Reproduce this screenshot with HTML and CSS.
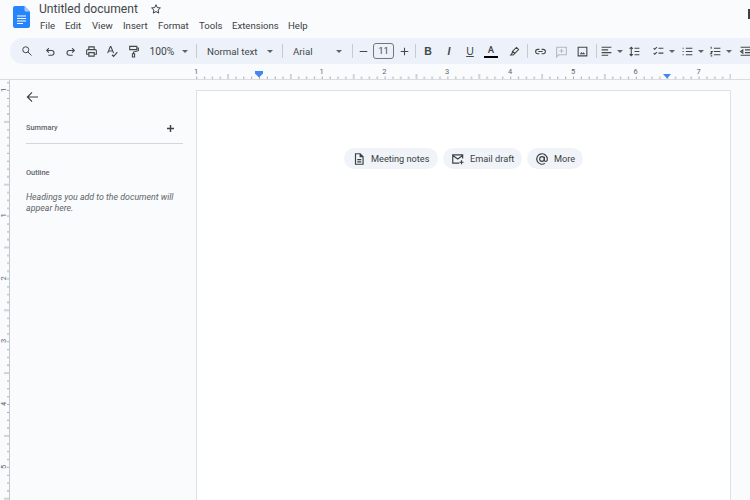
FILE: index.html
```html
<!DOCTYPE html>
<html lang="en">
<head>
<meta charset="utf-8">
<title>Untitled document</title>
<link rel="stylesheet" href="styles.css">
</head>
<body>
<header class="header">
  <svg class="logo" viewBox="0 0 17 22"><path d="M2 0h9.500L17 5.500V20a2 2 0 0 1-2 2H2a2 2 0 0 1-2-2V2a2 2 0 0 1 2-2z" fill="#2684fc"/><path d="M11.500 0L17 5.500h-4a1.500 1.500 0 0 1-1.500-1.500z" fill="#a9cbfa"/><path d="M4 10h9M4 12.500h9M4 15h9M4 17.500h6" stroke="#fff" stroke-width="1.200"/></svg>
  <div class="titles">
    <div class="title-row">
      <span class="title">Untitled document</span>
      <svg class="star" viewBox="0 0 24 24"><path d="M12 3.500l2.600 5.700 6.200.7-4.600 4.200 1.300 6.100L12 17.100l-5.500 3.100 1.300-6.100-4.600-4.200 6.200-.7z" fill="none" stroke="#3c4043" stroke-width="2"/></svg>
    </div>
    <nav class="menu"><span>File</span><span>Edit</span><span>View</span><span>Insert</span><span>Format</span><span>Tools</span><span>Extensions</span><span>Help</span></nav>
  </div>
  <span class="corner"></span>
</header>

<div class="toolbar">
  <span class="slot"><svg class="ic small" viewBox="0 0 24 24"><circle cx="9.500" cy="9.500" r="6"/><path d="M14 14l7 7"/></svg></span>
  <span class="slot m2"><svg class="ic" viewBox="0 0 24 24"><path d="M9 6L5 10l4 4M5 10h9a4.500 4.500 0 0 1 0 9H8"/></svg></span>
  <span class="slot mn1"><svg class="ic" viewBox="0 0 24 24"><path d="M15 6l4 4-4 4M19 10h-9a4.500 4.500 0 0 0 0 9h6"/></svg></span>
  <span class="slot"><svg class="ic" viewBox="0 0 24 24"><path d="M7 8V3.500h10V8M7 17H3v-6.500a2 2 0 0 1 2-2h14a2 2 0 0 1 2 2V17h-4M7 14h10v6.500H7z"/></svg></span>
  <span class="slot"><svg class="ic" viewBox="0 0 24 24"><path d="M3 15L8 3h1l5 12M5 11h7M11 18l3 3 7-8"/></svg></span>
  <span class="slot"><svg class="ic" viewBox="0 0 24 24"><path d="M5 2.500h13v6H5zM18 5.500h3v5l-9 2.500v3M10 16h4v6h-4z"/></svg></span>
  <span class="txt w-zoom">100%</span><span class="car w-car20"></span>
  <span class="sep m1"></span>
  <span class="txt w-style">Normal text</span><span class="car w-car14"></span>
  <span class="sep m5"></span>
  <span class="txt w-font">Arial</span><span class="car w-car14"></span>
  <span class="sep m6"></span>
  <span class="slot w20"><svg class="ic" viewBox="0 0 24 24"><path d="M5 12h14"/></svg></span>
  <span class="size">11</span>
  <span class="slot w20"><svg class="ic" viewBox="0 0 24 24"><path d="M5 12h14M12 5v14"/></svg></span>
  <span class="sep m1"></span>
  <span class="slot m1h fmt bold">B</span>
  <span class="slot fmt ital">I</span>
  <span class="slot fmt under">U</span>
  <span class="slot color"><span class="color-a">A</span><span class="color-bar"></span></span>
  <span class="slot m2"><svg class="ic" viewBox="0 0 24 24"><path d="M15.500 4.500l4 4-7 7-4-4zM8.500 11.500l-1 4-2.500 3h4.500l3-3"/></svg></span>
  <span class="sep m2h"></span>
  <span class="slot m1h"><svg class="ic" viewBox="0 0 24 24"><path d="M10 8H7a4 4 0 0 0 0 8h3M14 8h3a4 4 0 0 1 0 8h-3M8 12h8"/></svg></span>
  <span class="slot"><svg class="ic faint" viewBox="0 0 24 24"><path d="M3 4h18v14H7l-4 4zM12 7.500v7M8.500 11h7"/></svg></span>
  <span class="slot"><svg class="ic" viewBox="0 0 24 24"><path d="M4 4h16v16H4z"/><path class="solid" d="M7 17l3-4 2 2.500 2-2 3 3.500z"/></svg></span>
  <span class="sep m3h"></span>
  <span class="slot w19"><svg class="ic" viewBox="0 0 24 24"><path d="M3 4h18M3 9h12M3 14h18M3 19h12"/></svg></span><span class="car w-car7"></span>
  <span class="slot m1"><svg class="ic" viewBox="0 0 24 24"><path d="M6 4v16M3 7l3-3 3 3M3 17l3 3 3-3M12 6h9M12 12h9M12 18h9"/></svg></span>
  <span class="slot w20 m3"><svg class="ic" viewBox="0 0 24 24"><path d="M3 6l2 2 4-4M3 15l2 2 4-4M12 6h9M12 15h9"/></svg></span><span class="car w-car7"></span>
  <span class="slot w20 m2"><svg class="ic" viewBox="0 0 24 24"><path d="M3 6h2M3 12h2M3 18h2M9 6h12M9 12h12M9 18h12"/></svg></span><span class="car w-car7"></span>
  <span class="slot w20 m1"><svg class="ic" viewBox="0 0 24 24"><path d="M4 3v4M3 12h3l-3 4h3M3 20h3M9 6h12M9 12h12M9 18h12"/></svg></span><span class="car w-car7"></span>
  <span class="slot w20 m3"><svg class="ic" viewBox="0 0 24 24"><path d="M3 4h18M11 9h10M11 14h10M3 19h18M7 9l-4 3 4 3z"/></svg></span>
</div>

<svg class="h-ruler" viewBox="0 0 750 15">
  <defs>
    <pattern id="hticks" x="259" y="0" width="62.800" height="15" patternUnits="userSpaceOnUse">
      <path d="M.500 12.500v3M8.350 12.500v3M16.200 12.500v3M24.050 12.500v3M31.900 10v6M39.750 12.500v3M47.600 12.500v3M55.450 12.500v3" stroke="#a8adb2" stroke-width="1" fill="none"/>
    </pattern>
  </defs>
  <rect x="196" y="0" width="535" height="15" fill="url(#hticks)"/>
  <g class="rule-num">
    <text x="196" y="10">1</text><text x="321.500" y="10">1</text><text x="384.300" y="10">2</text><text x="447" y="10">3</text><text x="510" y="10">4</text><text x="573" y="10">5</text><text x="635.500" y="10">6</text><text x="698.500" y="10">7</text>
  </g>
  <path d="M255 7h8v2.500l-4 4-4-4z" fill="#4285f4"/>
  <path d="M663 10h8l-4 4.500z" fill="#4285f4"/>
</svg>

<main class="main">
  <svg class="v-ruler" viewBox="0 0 10 421">
    <defs>
      <pattern id="vticks" x="0" y="10" width="10" height="62.800" patternUnits="userSpaceOnUse">
        <path d="M7 .500h3M7 8.350h3M7 16.200h3M7 24.050h3M4 31.900h6M7 39.750h3M7 47.600h3M7 55.450h3" stroke="#a8adb2" fill="none"/>
      </pattern>
    </defs>
    <rect width="10" height="421" fill="url(#vticks)"/>
    <path d="M9.500 0v421" stroke="#c4c7c9" fill="none"/>
    <g class="rule-num">
      <text transform="translate(6 10) rotate(-90)">1</text>
      <text transform="translate(6 135.500) rotate(-90)">1</text>
      <text transform="translate(6 198.300) rotate(-90)">2</text>
      <text transform="translate(6 261) rotate(-90)">3</text>
      <text transform="translate(6 324) rotate(-90)">4</text>
      <text transform="translate(6 387) rotate(-90)">5</text>
    </g>
  </svg>

  <aside class="side">
    <svg class="back" viewBox="0 0 14 12"><path d="M13 6H1.500M6.500 1L1.500 6l5 5" fill="none" stroke="#3c4043" stroke-width="1.200"/></svg>
    <div class="side-row">
      <span class="side-label">Summary</span>
      <svg class="plus" viewBox="0 0 9 9"><path d="M4.500 1v7M1 4.500h7" stroke="#3c4043" stroke-width="1.400"/></svg>
    </div>
    <hr class="rule">
    <div class="side-label outline">Outline</div>
    <p class="hint">Headings you add to the document will appear here.</p>
  </aside>

  <section class="page">
    <div class="chips">
      <span class="chip c1"><svg class="ic chip-ic" viewBox="0 0 24 24"><path d="M6 3h8l5 5v13H6zM14 3v5h5M9 13h7M9 17h7"/></svg>Meeting notes</span>
      <span class="chip c2"><svg class="ic chip-ic" viewBox="0 0 24 24"><path d="M20 11V5H3v14h11M3 6l8.500 6L20 6M18 14v7M14.500 17.500h7"/></svg>Email draft</span>
      <span class="chip c3"><svg class="ic chip-ic" viewBox="0 0 24 24"><circle cx="12" cy="12" r="4"/><path d="M16 8v5.500a2.500 2.500 0 0 0 5 0V12a9 9 0 1 0-4 7.500"/></svg>More</span>
    </div>
  </section>
</main>
</body>
</html>
```
FILE: styles.css
```css
* { box-sizing: border-box; }
html, body { margin: 0; height: 100%; }
body {
  width: 750px;
  height: 500px;
  overflow: hidden;
  background: #f9fbfd;
  color: #3c4043;
  font-family: Roboto, "Liberation Sans", sans-serif;
  display: flex;
  flex-direction: column;
}

.header { height: 38px; flex: none; display: flex; }
.logo { width: 17px; height: 22px; margin: 6px 0 0 13px; flex: none; }
.titles { margin-left: 9px; }
.title-row { display: flex; align-items: center; height: 17px; }
.title { font-size: 12.100px; color: #444746; width: 99px; white-space: nowrap; }
.star { width: 12px; height: 12px; margin-left: 12px; }
.menu { display: flex; font-size: 9.600px; color: #3c4043; margin-top: 3px; line-height: 12px; padding-left: 1px; }
.menu span:nth-child(1) { width: 25px; }
.menu span:nth-child(2) { width: 27px; }
.menu span:nth-child(3) { width: 31px; }
.menu span:nth-child(4) { width: 35px; }
.menu span:nth-child(5) { width: 41px; }
.menu span:nth-child(6) { width: 33px; }
.menu span:nth-child(7) { width: 56px; }
.corner { width: 2px; height: 10px; background: #3c4043; margin: 9px 0 0 auto; }

.toolbar {
  height: 26px;
  flex: none;
  margin-left: 10px;
  padding-left: 6.500px;
  background: #edf2fa;
  border-radius: 13px 0 0 13px;
  display: flex;
  align-items: center;
  overflow: hidden;
  font-size: 9.700px;
  color: #444746;
}
.slot { width: 21px; height: 22px; flex: none; display: flex; align-items: center; justify-content: center; }
.w19 { width: 19px; }
.w20 { width: 20px; }
.m1 { margin-left: 1px; }
.m1h { margin-left: 1.500px; }
.m2 { margin-left: 2px; }
.m2h { margin-left: 2.500px; }
.m3 { margin-left: 3px; }
.m3h { margin-left: 3.500px; }
.m5 { margin-left: 5px; }
.m6 { margin-left: 6px; }
.mn1 { margin-left: -1px; }
.ic { width: 13px; height: 13px; fill: none; stroke: #444746; stroke-width: 2; flex: none; }
.ic.small { width: 12px; height: 12px; }
.ic .solid { fill: #444746; stroke: none; }
.faint { stroke: #b4b8bc; }
.txt { flex: none; white-space: nowrap; margin-left: 10px; }
.w-zoom { width: 26px; margin-left: 6px; font-size: 10.300px; }
.w-style { width: 56px; }
.w-font { width: 39px; }
.car { flex: none; height: 3px; display: flex; justify-content: center; }
.car::before { content: ""; border: 3px solid transparent; border-top: 3px solid #5f6368; border-bottom: 0; }
.w-car20 { width: 19.500px; }
.w-car14 { width: 14px; }
.w-car7 { width: 7px; }
.sep { width: 1px; height: 14px; background: #c7cbd1; flex: none; }
.size {
  width: 21px; height: 16px; flex: none;
  border: 1px solid #747775; border-radius: 3px;
  font-size: 9.500px; line-height: 14px; text-align: center;
}
.fmt { font-family: "Liberation Sans", sans-serif; font-size: 10.500px; color: #444746; }
.bold { font-weight: 700; }
.ital { font-style: italic; font-weight: 700; }
.under { text-decoration: underline; }
.color { flex-direction: column; gap: 1px; }
.color-a { font-size: 9.500px; line-height: 10px; color: #3c4043; font-weight: 500; }
.color-bar { width: 14px; height: 2px; background: #000; }

.h-ruler { display: block; width: 750px; height: 15px; flex: none; }
.rule-num text { font-family: Roboto, sans-serif; font-size: 7.500px; fill: #5f6368; text-anchor: middle; }

.main { flex: 1; display: flex; min-height: 0; border-top: 1px solid #dadce0; }
.v-ruler { display: block; width: 10px; height: 421px; flex: none; }

.side { width: 186px; flex: none; padding: 11px 13px 0 16px; }
.back { display: block; width: 13px; height: 12px; }
.side-row { display: flex; align-items: center; justify-content: space-between; margin-top: 19px; height: 12px; padding-right: 8px; }
.side-label { font-size: 7.400px; font-weight: 500; line-height: 12px; color: #5f6368; }
.plus { width: 9px; height: 9px; }
.rule { border: 0; border-top: 1px solid #d3d6da; margin: 9px 0 0; }
.outline { margin-top: 23px; }
.hint { margin: 13px 0 0; font-size: 8.800px; font-style: italic; line-height: 11px; color: #5f6368; }

.page {
  width: 535px;
  height: 421px;
  flex: none;
  margin-top: 10px;
  background: #fff;
  border: 1px solid #dfe1e5;
  border-bottom: 0;
}
.chips { display: flex; gap: 5px; margin: 57px 0 0 147px; }
.chip {
  height: 21px; flex: none;
  display: flex; align-items: center; gap: 5px;
  padding-left: 8px;
  background: #f0f4f9;
  border-radius: 11px;
  font-size: 9.200px;
  color: #3c4043;
  white-space: nowrap;
}
.chip-ic { width: 14px; height: 14px; stroke: #3c4043; }
.c1 { width: 94px; }
.c2 { width: 79px; }
.c3 { width: 56px; }
```
